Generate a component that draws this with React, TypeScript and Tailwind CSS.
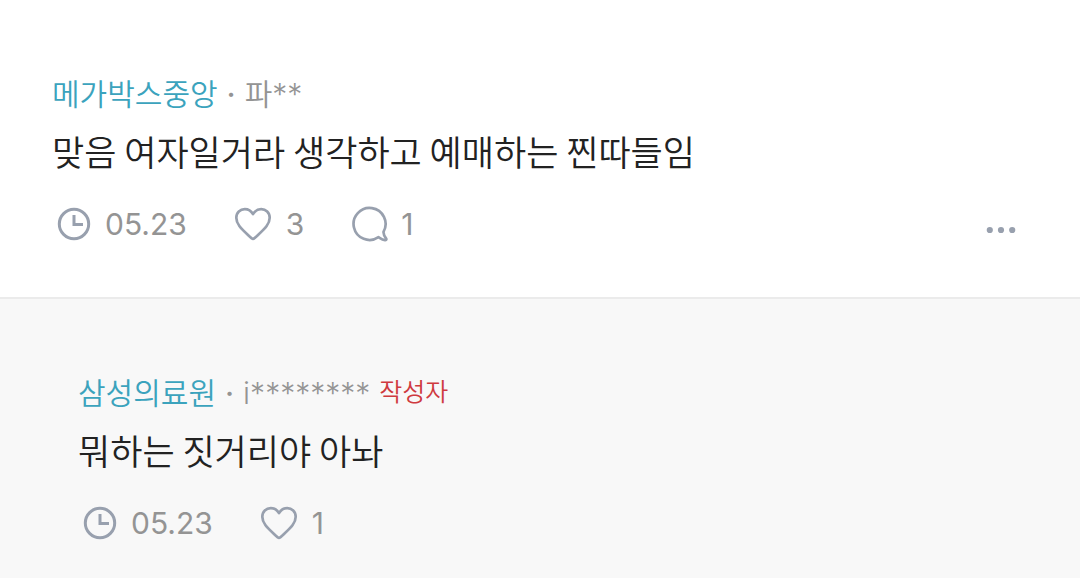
import React from "react";

type CommentProps = {
  company: string;
  nickname: string;
  isWriter?: boolean;
  text: string;
  date: string;
  likes: number;
  replies?: number;
  isReply?: boolean;
};

const ClockIcon = () => (
  <svg className="w-9 h-9" viewBox="0 0 36 36" fill="none" stroke="#98a0ae" strokeWidth="3" aria-hidden="true">
    <circle cx="18" cy="18" r="14.7" />
    <path d="M18 9V18.500H27" />
  </svg>
);

const HeartIcon = () => (
  <svg className="w-10 h-9" viewBox="0 0 40 36" fill="none" stroke="#98a0ae" strokeWidth="2.7" strokeLinejoin="round" aria-hidden="true">
    <path d="M20 32.800C19 32.800 17.500 31.500 15 29C8 22.500 3.300 18 3.300 11.800C3.300 6.500 7.200 3.200 11.800 3.200C15.500 3.200 18.300 5.200 20 8.200C21.700 5.200 24.500 3.200 28.200 3.200C32.800 3.200 36.700 6.500 36.700 11.800C36.700 18 32 22.500 25 29C22.500 31.500 21 32.800 20 32.800Z" />
  </svg>
);

const BubbleIcon = () => (
  <svg className="w-9 h-9" viewBox="0 0 36 36" fill="none" stroke="#98a0ae" strokeWidth="2.7" strokeLinejoin="round" aria-hidden="true">
    <path d="M26.500 31.200A16 16 0 1 1 31.500 25.800C31.300 28.500 33 31 34.300 32.800C34.600 33.800 34 34.300 33 34.200C30.500 34 28.500 32.500 26.500 31.200Z" />
  </svg>
);

const Comment = ({ company, nickname, isWriter, text, date, likes, replies, isReply }: CommentProps) => {
  return (
    <article className={isReply ? "bg-[#f8f8f8] pt-[76px] pb-9 pl-[78px] pr-16" : "bg-white pt-[76px] pb-[53px] pl-[52px] pr-16"}>
      <div className="flex items-center h-9 text-[30px] font-[350] text-[#949494]">
        <a href="#" className="text-[#3ba3bd]">{company}</a>
        <span className="mx-[9px] font-medium">·</span>
        <span>{nickname}</span>
        {isWriter && <span className="ml-[9px] text-[25px] text-[#cf3a3f]">작성자</span>}
      </div>
      <p className="mt-4 leading-[46px] text-[35px] font-[350] font-['Noto_Sans_CJK_KR',sans-serif] text-[#222222]">{text}</p>
      <div className="flex items-center mt-[30px] ml-1 h-10 text-3xl text-[#949494]">
        <ClockIcon />
        <time className="ml-[13px]">{date}</time>
        <button type="button" aria-label="좋아요" className="flex items-center gap-[13px] ml-[46px]">
          <HeartIcon />
          {likes}
        </button>
        {replies !== undefined && (
          <button type="button" aria-label="댓글" className="flex items-center gap-[13px] ml-12">
            <BubbleIcon />
            {replies}
          </button>
        )}
        {!isReply && (
          <button type="button" aria-label="더보기" className="ml-auto mt-3">
            <svg className="w-8 h-8" viewBox="0 0 32 32" fill="#98a0ae" aria-hidden="true">
              <circle cx="5.800" cy="16" r="3.1" />
              <circle cx="17" cy="16" r="3.1" />
              <circle cx="28.200" cy="16" r="3.1" />
            </svg>
          </button>
        )}
      </div>
    </article>
  );
};

const App = () => {
  return (
    <main className="min-h-screen bg-[#f8f8f8] font-['Inter','Noto_Sans_CJK_KR',sans-serif]">
      <Comment
        company="메가박스중앙"
        nickname="파**"
        text="맞음 여자일거라 생각하고 예매하는 찐따들임"
        date="05.23"
        likes={3}
        replies={1}
      />
      <div className="border-t-2 border-[#ebebeb]">
        <Comment
          company="삼성의료원"
          nickname="i********"
          isWriter
          text="뭐하는 짓거리야 아놔"
          date="05.23"
          likes={1}
          isReply
        />
      </div>
    </main>
  );
};

export default App;
